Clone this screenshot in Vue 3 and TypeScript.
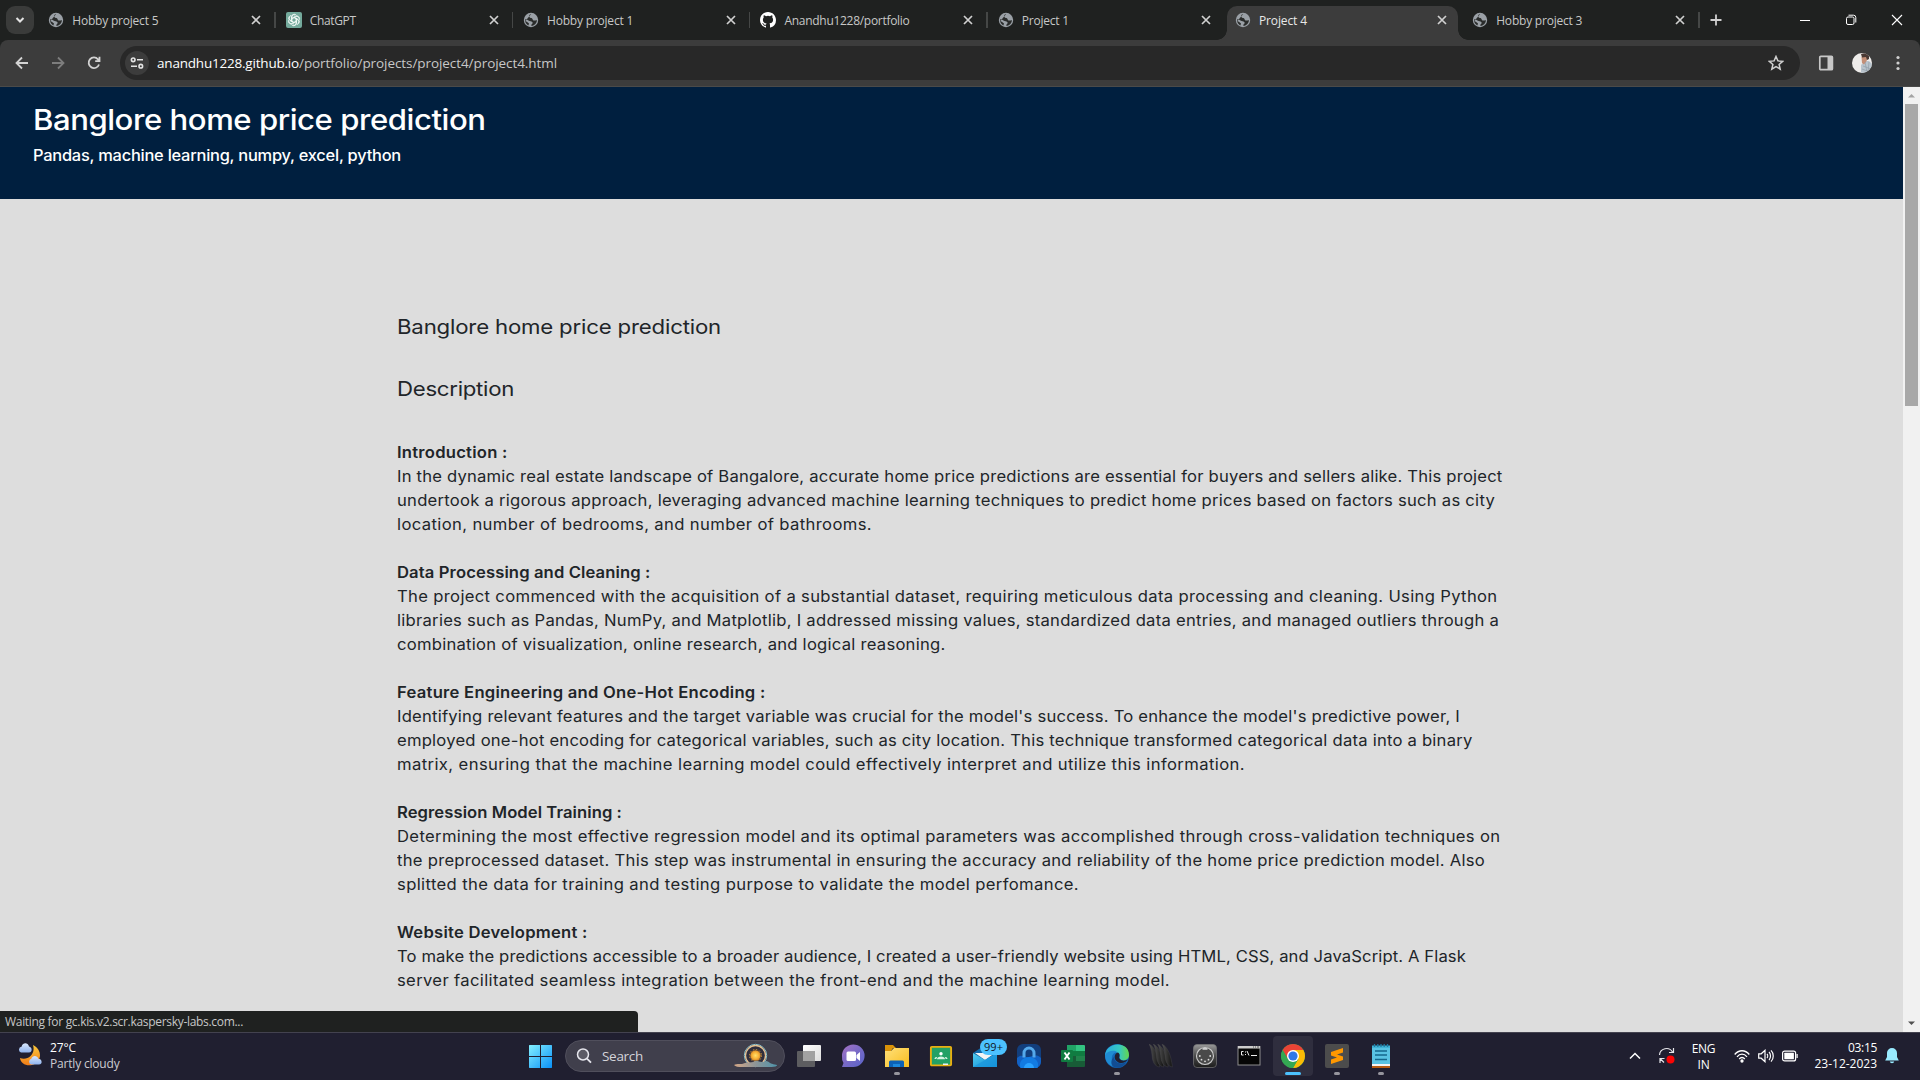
<script setup lang="ts">
import type { Directive } from 'vue'

interface Tab { title: string; icon: 'globe' | 'gpt' | 'github'; width: number; active?: boolean }
interface Line { text: string; width: number }
interface Section { title: Line; lines: Line[] }

// Tracks the text out (or in) so that the run takes exactly the given width,
// taking any horizontal stretch of the element into account.
const vFit: Directive<HTMLElement, number> = {
  mounted(el, binding) {
    const length = (el.textContent ?? '').length
    const drawn = el.getBoundingClientRect().width
    const stretch = new DOMMatrix(getComputedStyle(el).transform).a
    el.style.letterSpacing = `${(binding.value - drawn) / stretch / length}px`
  },
}

const tabs: Tab[] = [
  { title: 'Hobby project 5', icon: 'globe', width: 86 },
  { title: 'ChatGPT', icon: 'gpt', width: 46 },
  { title: 'Hobby project 1', icon: 'globe', width: 86 },
  { title: 'Anandhu1228/portfolio', icon: 'github', width: 125 },
  { title: 'Project 1', icon: 'globe', width: 47 },
  { title: 'Project 4', icon: 'globe', width: 48, active: true },
  { title: 'Hobby project 3', icon: 'globe', width: 86 },
]

const sections: Section[] = [
  {
    title: { text: 'Introduction :', width: 110.5 },
    lines: [
      { text: 'In the dynamic real estate landscape of Bangalore, accurate home price predictions are essential for buyers and sellers alike. This project', width: 1105.5 },
      { text: 'undertook a rigorous approach, leveraging advanced machine learning techniques to predict home prices based on factors such as city', width: 1098 },
      { text: 'location, number of bedrooms, and number of bathrooms.', width: 475 },
    ],
  },
  {
    title: { text: 'Data Processing and Cleaning :', width: 253.5 },
    lines: [
      { text: 'The project commenced with the acquisition of a substantial dataset, requiring meticulous data processing and cleaning. Using Python', width: 1100.5 },
      { text: 'libraries such as Pandas, NumPy, and Matplotlib, I addressed missing values, standardized data entries, and managed outliers through a', width: 1102 },
      { text: 'combination of visualization, online research, and logical reasoning.', width: 548.5 },
    ],
  },
  {
    title: { text: 'Feature Engineering and One-Hot Encoding :', width: 368.5 },
    lines: [
      { text: "Identifying relevant features and the target variable was crucial for the model's success. To enhance the model's predictive power, I", width: 1063 },
      { text: 'employed one-hot encoding for categorical variables, such as city location. This technique transformed categorical data into a binary', width: 1075.5 },
      { text: 'matrix, ensuring that the machine learning model could effectively interpret and utilize this information.', width: 848 },
    ],
  },
  {
    title: { text: 'Regression Model Training :', width: 225 },
    lines: [
      { text: 'Determining the most effective regression model and its optimal parameters was accomplished through cross-validation techniques on', width: 1103.5 },
      { text: 'the preprocessed dataset. This step was instrumental in ensuring the accuracy and reliability of the home price prediction model. Also', width: 1088 },
      { text: 'splitted the data for training and testing purpose to validate the model perfomance.', width: 682 },
    ],
  },
  {
    title: { text: 'Website Development :', width: 190.5 },
    lines: [
      { text: 'To make the predictions accessible to a broader audience, I created a user-friendly website using HTML, CSS, and JavaScript. A Flask', width: 1069 },
      { text: 'server facilitated seamless integration between the front-end and the machine learning model.', width: 773 },
    ],
  },
]
</script>

<template>
  <div class="screen">
    <div class="strip">
      <button class="tab-search">
        <svg width="28" height="28" viewBox="0 0 28 28"><path d="M10.500 12l3.500 3.500 3.500-3.500" fill="none" stroke="#e3e3e3" stroke-width="2" /></svg>
      </button>
      <div v-for="(tab, i) in tabs" :key="i" class="tab" :class="{ active: tab.active, bare: i === 4 || tab.active }">
        <svg v-if="tab.icon === 'globe'" class="favicon" viewBox="0 0 16 16">
          <circle cx="8" cy="8" r="7.200" fill="#9aa0a6" />
          <path d="M8.200 2.100C6 2.700 5.600 4.200 6.600 5.300c.7.8 1.800.6 2.500 1.200.8.700.5 1.900 1.600 2 1.200.100 2.300-.5 3.300-.3-.2 2.700-2.300 5.200-5.200 5.700-.8-.6-.5-1.300.2-1.900.8-.7.9-1.500.2-2.100-.8-.7-2.300-.5-3.300-1.100C4.700 8.100 4.500 7.300 2.100 7.200c-.3 2.700 1 5 3.200 6.200L6 11.800c-.2-.8-1-1-1.600-1.500-.6-.5-1.400-1.200-2-1.300" fill="#2a2c2b" />
        </svg>
        <svg v-else-if="tab.icon === 'gpt'" class="favicon" viewBox="0 0 16 16">
          <rect width="16" height="16" rx="2" fill="#74aa9c" />
          <g fill="none" stroke="#f4fbf8" stroke-width=".85">
            <path v-for="a in 6" :key="a" :transform="`rotate(${a * 60} 8 8)`" d="M6 8.900V4.800c0-2.800 3.500-3.300 4.500-1.400M6 6.300l3.600-2.100c1.800-.8 3.400.7 3.200 2.300" />
          </g>
        </svg>
        <svg v-else class="favicon" viewBox="0 0 16 16">
          <path fill="#fff" d="M8 0C3.580 0 0 3.580 0 8c0 3.540 2.290 6.530 5.470 7.590.4.070.55-.17.55-.38v-1.490c-2.230.48-2.700-.94-2.700-.94-.36-.92-.89-1.170-.89-1.170-.72-.5.060-.49.060-.49.8.060 1.220.82 1.220.82.71 1.220 1.870.87 2.330.66.070-.52.280-.87.500-1.070-1.780-.2-3.640-.89-3.640-3.950 0-.87.310-1.590.82-2.150-.08-.2-.36-1.020.08-2.120 0 0 .67-.21 2.200.82a7.600 7.600 0 014 0c1.530-1.030 2.200-.82 2.200-.82.44 1.100.160 1.920.080 2.120.51.56.82 1.270.82 2.150 0 3.070-1.870 3.750-3.650 3.950.29.250.54.730.54 1.480v2.200c0 .21.150.46.550.38A8 8 0 0016 8c0-4.420-3.580-8-8-8z" />
        </svg>
        <span class="tab-title"><span v-fit="tab.width" class="fit">{{ tab.title }}</span></span>
        <svg class="tab-close" viewBox="0 0 10 10"><path d="M1 1l8 8M9 1L1 9" stroke="currentColor" stroke-width="1.700" /></svg>
      </div>
      <svg class="new-tab" viewBox="0 0 12 12"><path d="M6 .5v11M.5 6h11" stroke="#d0d0d0" stroke-width="1.800" /></svg>
      <div class="window-controls">
        <svg viewBox="0 0 12 12"><path d="M1 6.500h10" stroke="#fff" /></svg>
        <svg viewBox="0 0 12 12" fill="none" stroke="#fff"><rect x="1.500" y="3" width="7.500" height="7.500" rx="1.500" /><path d="M3.500 1.200h5a2.300 2.300 0 012.300 2.300v5" /></svg>
        <svg viewBox="0 0 12 12"><path d="M1 1l10 10M11 1L1 11" stroke="#fff" stroke-width="1.100" /></svg>
      </div>
    </div>

    <div class="toolbar">
      <svg class="nav" viewBox="0 0 16 16"><path d="M14 8H3M8 2.500L2.500 8 8 13.500" /></svg>
      <svg class="nav dim" viewBox="0 0 16 16"><path d="M2 8h11M8 2.500L13.500 8 8 13.500" /></svg>
      <svg class="nav" viewBox="0 0 16 16"><path d="M13 9.500A5.300 5.300 0 1112 4.300l1.200 1.300M13.500 1.800v4.400H9.200" /></svg>
      <div class="omnibox">
        <span class="site-info">
          <svg width="14" height="14" viewBox="0 0 14 14" fill="none" stroke="#e3e3e3" stroke-width="1.600"><circle cx="3.200" cy="3.800" r="1.800" /><path d="M7 3.800h6M1 10.200h6" /><circle cx="10.800" cy="10.200" r="1.800" /></svg>
        </span>
        <span class="url"><span v-fit="142" class="fit host">anandhu1228.github.io</span><span v-fit="258" class="fit">/portfolio/projects/project4/project4.html</span></span>
        <svg class="star" viewBox="0 0 16 16"><path d="M8 1.500l1.900 4.400 4.800.4-3.600 3.100 1.100 4.700L8 11.600l-4.200 2.500 1.100-4.700L1.300 6.300l4.800-.4z" fill="none" stroke="#d0d0d0" stroke-width="1.500" /></svg>
      </div>
      <svg class="panel" viewBox="0 0 16 16"><rect x="1.800" y="1.300" width="12.600" height="13.400" rx="1" fill="none" stroke="#c7c7c7" stroke-width="1.700" /><path d="M9.500 1h5v14h-5z" fill="#c7c7c7" /></svg>
      <svg class="avatar" viewBox="0 0 20 20">
        <defs><clipPath id="face"><circle cx="10" cy="10" r="10" /></clipPath></defs>
        <g clip-path="url(#face)"><path fill="#eeecea" d="M0 0h20v20H0z" /><path fill="#b9c4cd" d="M9 12l4-4 4 0 3 3v9H9z" /><path fill="#c48f77" d="M9.500 4l4-2 2.500 3-2 4-2 2.500-2-1.500z" /><path fill="#4a3a35" d="M9 1l4-1 4 2v4l-2 1-1-3-4 .5z" /><path stroke="#8b98a3" stroke-width=".6" d="M11 13l8 3M10 16l8 3M13 9l2 10M17 9l-1 10" /></g>
      </svg>
      <svg class="kebab" viewBox="0 0 4 16" fill="#d0d0d0"><circle cx="2" cy="2.500" r="1.600" /><circle cx="2" cy="8" r="1.600" /><circle cx="2" cy="13.500" r="1.600" /></svg>
    </div>

    <div class="viewport">
      <div class="page">
        <header class="banner">
          <h1><span v-fit="452.500" class="fit">Banglore home price prediction</span></h1>
          <p><span v-fit="368" class="fit">Pandas, machine learning, numpy, excel, python</span></p>
        </header>
        <main class="article">
          <h2><span v-fit="324" class="fit">Banglore home price prediction</span></h2>
          <h2><span v-fit="117" class="fit">Description</span></h2>
          <section v-for="s in sections" :key="s.title.text">
            <h3><span v-fit="s.title.width" class="fit">{{ s.title.text }}</span></h3>
            <p v-for="line in s.lines" :key="line.text"><span v-fit="line.width" class="fit">{{ line.text }}</span></p>
          </section>
        </main>
      </div>
      <div class="scrollbar">
        <svg viewBox="0 0 17 17"><path d="M5 10.500h7L8.500 7z" fill="#a3a3a3" /></svg>
        <div class="thumb"></div>
        <svg class="down" viewBox="0 0 17 17"><path d="M5 6.500h7L8.500 10z" fill="#505050" /></svg>
      </div>
      <div class="status"><span v-fit="238" class="fit">Waiting for gc.kis.v2.scr.kaspersky-labs.com...</span></div>
    </div>

    <footer class="taskbar">
      <div class="weather">
        <svg width="24" height="24" viewBox="0 0 24 24">
          <defs><linearGradient id="moon" x2="0" y2="1"><stop stop-color="#fbc83a" /><stop offset="1" stop-color="#f07c18" /></linearGradient><linearGradient id="cloud" x2="0" y2="1"><stop stop-color="#d9e7fc" /><stop offset="1" stop-color="#8fb3ee" /></linearGradient></defs>
          <path d="M15 2c10 5 9 17-1 20C8 23.500 2.500 20 2 15c7 3 16-3 13-13z" fill="url(#moon)" />
          <path d="M3 9.500a3 3 0 01.5-5.800C5-1 10-.5 11 3.500c3.500.5 3.500 6 0 6z" fill="url(#cloud)" />
          <path d="M13 21.500a3 3 0 01.3-5.700c1.200-4 6.200-3.500 7 0 4.300.3 4.300 5.700.7 5.700z" fill="url(#cloud)" />
        </svg>
        <div class="weather-text"><span v-fit="26" class="fit">27°C</span><span v-fit="69.500" class="fit soft">Partly cloudy</span></div>
      </div>

      <div class="launcher">
        <svg class="start" viewBox="0 0 23 23"><defs><linearGradient id="win" x2="1" y2="1"><stop stop-color="#84f0ff" /><stop offset="1" stop-color="#0a91f8" /></linearGradient></defs><path d="M.5 0H11v11H0V.5zM12 0h10.500l.5.500V11H12zM0 12h11v11H.5l-.5-.5zM12 12h11v10.500l-.5.500H12z" fill="url(#win)" /></svg>
        <div class="search">
          <svg class="glass" viewBox="0 0 16 16"><circle cx="7" cy="6.500" r="5.500" fill="#5c5b66" stroke="#e7e7ee" stroke-width="1.500" /><path d="M11 10.700l4 4" stroke="#e7e7ee" stroke-width="1.700" /></svg>
          <span v-fit="41" class="fit">Search</span>
          <svg class="sun" viewBox="0 0 44 26">
            <defs><radialGradient id="glow"><stop stop-color="#ffe06a" /><stop offset=".6" stop-color="#f9b53b" /><stop offset="1" stop-color="#d98a25" /></radialGradient><linearGradient id="hill"><stop stop-color="#d6a887" /><stop offset=".5" stop-color="#8d9597" /><stop offset="1" stop-color="#4f94aa" /></linearGradient></defs>
            <circle cx="21.500" cy="12.500" r="11.200" fill="#302e3d" stroke="#83bfce" stroke-width="1" /><circle cx="21.500" cy="12.500" r="10" fill="none" stroke="#e4c193" stroke-width="1.300" />
            <circle cx="21.500" cy="12.500" r="5.200" fill="url(#glow)" /><circle cx="21.500" cy="12.500" r="6" fill="none" stroke="#d99a36" stroke-dasharray="1.500 1.600" />
            <path d="M0 22c3-2 7 0 11-2 4-1 6 0 9-1.500 3-2 5 .5 8 .5 2 0 4-2 6-.5s3 2.500 9 3.500c1 1-3 2.500-7 2H12C7 24 2 24.500 0 22z" fill="url(#hill)" />
          </svg>
        </div>
        <div class="app"><svg viewBox="0 0 24 24"><defs><linearGradient id="tv" x2="1" y2="1"><stop stop-color="#fff" /><stop offset="1" stop-color="#ddd" /></linearGradient></defs><rect x="6" y="1" width="18" height="16" rx="1" fill="url(#tv)" /><rect x="0" y="7" width="18" height="16" rx="1" fill="#686868" opacity=".85" /><path d="M6 7h12v10H6z" fill="#a2a2a2" /></svg></div>
        <div class="app"><svg viewBox="0 0 24 24"><defs><linearGradient id="chat" x2="1" y2="1"><stop stop-color="#a873c5" /><stop offset=".5" stop-color="#786ac6" /><stop offset="1" stop-color="#5964cb" /></linearGradient></defs><path d="M1 12a11.300 11.300 0 1111 11H1l1.500-4A11 11 0 011 12z" fill="url(#chat)" /><rect x="5.500" y="7.500" width="9.500" height="9.500" rx="1.500" fill="#fff" /><path d="M15.500 11l3.500-3v9l-3.500-3z" fill="#fff" /></svg></div>
        <div class="app run"><svg viewBox="0 0 24 24"><defs><linearGradient id="dir" x2="1" y2="1"><stop stop-color="#ffe07a" /><stop offset="1" stop-color="#f9bd1d" /></linearGradient></defs><path d="M0 1h8l3 3h-3L6 7H0z" fill="#d99208" /><path d="M0 7h6l3-3h15v19H0z" fill="url(#dir)" /><path d="M4 23v-5a1.500 1.500 0 011.500-1.500h12A1.500 1.500 0 0119 18v5z" fill="#0c62b6" /><path d="M8 20h7v3H8z" fill="#1c89dc" /></svg></div>
        <div class="app"><svg viewBox="0 0 24 24"><rect x="1.900" y="2.900" width="20.200" height="18.500" rx=".8" fill="#23a165" stroke="#e9b012" stroke-width="1.900" /><circle cx="12" cy="9.800" r="1.700" fill="#fff" /><path d="M8 15.200c0-3.700 8-3.700 8 0zM5.500 15c0-1.800 1.500-2.400 2.600-1.900l-.8 1.900zM18.500 15c0-1.800-1.500-2.400-2.600-1.900l.8 1.900z" fill="#d8f3e2" /><path d="M14 19.500h5v1.500h-5z" fill="#eee" /></svg></div>
        <div class="app"><svg viewBox="0 0 24 24"><defs><linearGradient id="mail" x2="1" y2="1"><stop stop-color="#52cdf0" /><stop offset="1" stop-color="#0c8bd5" /></linearGradient></defs><path d="M0 9L12 1l12 8-12 8z" fill="#1167a8" /><path d="M2 9h20l-10 7z" fill="#f4f4f4" /><path d="M0 9l12 7 12-7v14H0z" fill="url(#mail)" /><path d="M0 23L24 9v14z" fill="#1996dc" opacity=".7" /></svg><span class="badge">99+</span></div>
        <div class="app"><svg viewBox="0 0 24 24"><rect width="24" height="24" rx="6" fill="#123e7c" /><path d="M0 14C5 9 8 14 12 13s8-3 12 1v4a6 6 0 01-6 6H6a6 6 0 01-6-6z" fill="#1261c4" /><path d="M7 13.500V9a5 5 0 0110 0v4.500" fill="none" stroke="#55a9eb" stroke-width="3" /><path d="M3.500 24C1 18 6 13 12 13s11 5 8.500 11z" fill="#127be2" /><path d="M7 24a5 5 0 0110 0z" fill="#29a2ff" /></svg></div>
        <div class="app"><svg viewBox="0 0 24 24"><path fill="#21a366" d="M6 1h9v6H6z" /><path fill="#33c481" d="M15 1h8a1 1 0 011 1v5h-9z" /><path fill="#107c41" d="M6 7h9v5H6zM15 7h9v5h-9z" /><path fill="#185c37" d="M6 12h18v10a1 1 0 01-1 1H6z" /><path fill="#21834c" d="M15 12h9v5h-9z" /><rect y="6" width="12" height="12" rx="1" fill="#107c41" /><path d="M3.500 8.500l5 7M8.500 8.500l-5 7" stroke="#fff" stroke-width="1.900" /></svg></div>
        <div class="app run"><svg viewBox="0 0 24 24"><defs><linearGradient id="edge"><stop stop-color="#2aa9df" /><stop offset=".6" stop-color="#36c8c2" /><stop offset="1" stop-color="#65d84a" /></linearGradient></defs><circle cx="12" cy="12" r="12" fill="#1269b9" /><path d="M0 12C0-2 24-4 24 11c0 5-6 7-9 4-1.500-1.500.5-2-.5-4.500C12 6 3 7 0 12z" fill="url(#edge)" /><path d="M0 11c3-5 10-5 12-3-6 1-7 8-2 14C5 23 0 18 0 11z" fill="#208bd2" /><path d="M13 8.500c3 2 .5 4.500 1.500 6 2 3 6 2.500 8.500 1-2 3-6 4.500-9.500 3C8 16 9 9 13 8.500z" fill="#211f30" /><path d="M9 13c0 6 7 8 12.500 5C19 23 13 25 9 23c-4-2-3-8 0-10z" fill="#124d93" /></svg></div>
        <div class="app"><svg viewBox="0 0 24 24"><defs><linearGradient id="claw" x2="1"><stop stop-color="#555" /><stop offset="1" stop-color="#111" /></linearGradient></defs><path v-for="n in 4" :key="n" :transform="`translate(${(n - 1) * 4.3} 0)`" d="M0 0c6 3 9 11 10.500 23-5-1-7-5-7.500-12C2.500 6 1.500 3 0 0z" fill="url(#claw)" stroke="#4a4a4d" stroke-width=".4" /></svg></div>
        <div class="app"><svg viewBox="0 0 24 24"><defs><linearGradient id="port" x2="0" y2="1"><stop stop-color="#999" /><stop offset=".5" stop-color="#4a4a4a" /><stop offset="1" stop-color="#1c1c1c" /></linearGradient></defs><rect x=".5" y=".5" width="23" height="23" rx="3.500" fill="url(#port)" stroke="#777" stroke-width=".7" /><circle cx="12" cy="12" r="8.500" fill="#4a4a4a" stroke="#ccc" stroke-width="1.100" /><path d="M9.500 4h5v1.800h-5z" fill="#ccc" /><g fill="#ddd"><circle cx="6.800" cy="12" r=".9" /><circle cx="17.200" cy="12" r=".9" /><circle cx="8.500" cy="15.700" r=".9" /><circle cx="15.500" cy="15.700" r=".9" /><circle cx="12" cy="17.300" r=".9" /></g></svg></div>
        <div class="app"><svg viewBox="0 0 24 24"><rect x="1" y="2.500" width="22" height="18.500" fill="#050505" stroke="#8e8e8e" /><path d="M1 2h22v2.500H1z" fill="#ccc" /><path d="M16 3h1M18 3h1M20 3h2" stroke="#555" /><path d="M6.500 7.500h-2v3.500h2M8.500 7.500v1M8.500 10v1M10 7l2 4.500M14 11.500h6" fill="none" stroke="#eee" /></svg></div>
        <div class="app focus"><svg viewBox="0 0 24 24"><circle cx="12" cy="12" r="12" fill="#34a853" /><path d="M12 12L1.610 6A12 12 0 0122.390 6z" fill="#ea4335" /><path d="M12 6h10.390A12 12 0 0112 24l5.200-9z" fill="#fbbc05" /><path d="M1.610 6L6.800 15l5.200-3-1-6z" fill="#ea4335" /><path d="M1.610 6A12 12 0 0012 24l5.200-9H6.800z" fill="#34a853" /><circle cx="12" cy="12" r="6" fill="#fff" /><circle cx="12" cy="12" r="4.600" fill="#2f78e8" /></svg></div>
        <div class="app run"><svg viewBox="0 0 24 24"><rect width="24" height="24" rx="2" fill="#4c4c4c" /><path d="M6 8l12-4v4.500l-6 2 6 2.100V16L6 20v-4.500l6-2-6-2z" fill="#ff9800" /></svg></div>
        <div class="app run"><svg viewBox="0 0 24 24"><path d="M3 2h18v19H3z" fill="#59c3e3" /><path d="M3 1.500h18V4H3z" fill="#3fb2d6" /><path d="M3 20h18v2H3z" fill="#f4f4f4" /><path d="M3 22h18v2H3z" fill="#b75c12" /><path d="M5.500 0v3M8.800 0v3M12 0v3M15.200 0v3M18.500 0v3" stroke="#1d7ba2" stroke-width="1.300" /><path d="M6 7h12M6 11h12M6 15.500h12" stroke="#14688d" stroke-width="1.400" /></svg></div>
      </div>

      <div class="tray">
        <svg class="chevron" viewBox="0 0 12 8"><path d="M1 6.500l5-5 5 5" fill="none" stroke="#fff" stroke-width="1.500" /></svg>
        <svg class="sync" viewBox="0 0 18 18"><path d="M1.500 8A7 7 0 0114.500 5M15.500 1v4.500H11M6 15.500l-3.500-3.500M2 16v-4.500h4.500" fill="none" stroke="#e6e6ea" stroke-width="1.200" /><circle cx="12.500" cy="12.500" r="4" fill="#fb0505" /></svg>
        <div class="lang"><span v-fit="23.500" class="fit">ENG</span><span v-fit="12" class="fit">IN</span></div>
        <svg class="wifi" viewBox="0 0 16 14" fill="none" stroke="#fff" stroke-width="1.300"><path d="M.7 5.500c4-5 10.600-5 14.600 0M3 7.800c3-3.500 7-3.500 10 0M5.200 10c1.700-2 3.900-2 5.600 0" /><circle cx="8" cy="12" r="1" fill="#fff" /></svg>
        <svg class="sound" viewBox="0 0 17 14" fill="none" stroke="#fff" stroke-width="1.200"><path d="M.7 4.800h2.500L7 1.300v11.400L3.200 9.200H.7zM9 5c.9 1 .9 3 0 4M11 3c2 2 2 6 0 8M13 1.300c3 3 3 8.400 0 11.400" /></svg>
        <svg class="battery" viewBox="0 0 16 12"><rect x=".6" y="1.100" width="13" height="9.800" rx="2" fill="none" stroke="#fff" stroke-width="1.200" /><rect x="2.300" y="2.800" width="9.600" height="6.400" rx=".5" fill="#fff" /><path d="M14.500 4h1.200v4h-1.200z" fill="#fff" /></svg>
        <div class="clock"><span v-fit="29" class="fit">03:15</span><span v-fit="62.500" class="fit">23-12-2023</span></div>
        <svg class="bell" viewBox="0 0 14 16" fill="#99ebff"><path d="M7 0a5 5 0 00-5 5v4L.2 12.500h13.600L12 9V5a5 5 0 00-5-5zM4.800 13.500h4.400c-.4 2.300-4 2.300-4.400 0z" /></svg>
      </div>
    </footer>
  </div>
</template>

<style>
html,
body {
  margin: 0;
  overflow: hidden;
}
</style>

<style scoped>
.screen {
  width: 1920px;
  height: 1080px;
  display: flex;
  flex-direction: column;
  overflow: hidden;
  background: #1f2120;
  font-family: "Open Sans", "Noto Sans", sans-serif;
  font-size: 12px;
}
svg { display: block; flex: none; }
.fit { display: inline-block; white-space: pre; flex: none; }

.strip {
  height: 40px;
  flex: none;
  display: flex;
  align-items: center;
  background: #1f2120;
}
.tab-search {
  margin: 0 4.3px 0 6px;
  padding: 0;
  width: 28px;
  height: 28px;
  border: 0;
  border-radius: 9px;
  background: #3a3b3a;
}
.tab {
  position: relative;
  box-sizing: border-box;
  width: 237.4px;
  height: 34px;
  margin-top: 6px;
  padding: 0 14.5px 6px 10px;
  display: flex;
  align-items: center;
  color: #c7c8c7;
}
.tab::after {
  content: "";
  position: absolute;
  right: 0;
  top: 6px;
  width: 1.5px;
  height: 16px;
  background: #454746;
}
.tab.bare::after { display: none; }
.tab.active {
  width: 231px;
  margin-left: 1.7px;
  margin-right: 4.3px;
  padding-left: 8px;
  padding-right: 11px;
  border-radius: 10px 10px 0 0;
  background: #3c3c3c;
  color: #e8e8e8;
}
.tab.active::before,
.tab.active::after {
  content: "";
  display: block;
  position: absolute;
  top: auto;
  right: auto;
  bottom: 0;
  left: -10px;
  width: 10px;
  height: 10px;
  background: radial-gradient(circle at 0 0, transparent 9.5px, #3c3c3c 10px);
}
.tab.active::after {
  left: 100%;
  background: radial-gradient(circle at 100% 0, transparent 9.5px, #3c3c3c 10px);
}
.favicon { width: 16px; height: 16px; margin-right: 8px; }
.tab-title { flex: 1; line-height: 16px; padding-top: 1px; }
.tab-close { width: 10px; height: 10px; color: #d0d0d0; }
.new-tab { width: 12px; height: 12px; margin-left: 10px; }
.window-controls { margin-left: auto; margin-right: 17px; display: flex; gap: 34px; }
.window-controls svg { width: 12px; height: 12px; }

.toolbar {
  height: 47px;
  flex: none;
  box-sizing: border-box;
  padding: 0 20px 0 14px;
  display: flex;
  align-items: center;
  background: #3c3c3c;
  border-bottom: 1px solid #4a4a49;
  border-radius: 8px 8px 0 0;
}
.nav { width: 16px; height: 16px; margin-right: 20px; fill: none; stroke: #d3d3d3; stroke-width: 1.8; }
.nav.dim { stroke: #7d7d7d; }
.omnibox {
  width: 1680px;
  height: 34px;
  margin-left: -2px;
  box-sizing: border-box;
  padding: 0 16px 0 5px;
  border-radius: 17px;
  background: #282828;
  display: flex;
  align-items: center;
}
.site-info { width: 24px; height: 24px; border-radius: 50%; background: #3c3c3c; display: flex; align-items: center; justify-content: center; }
.url { display: flex; flex: 1; margin-left: 8px; font-size: 13.5px; line-height: 20px; color: #c7c7c7; }
.host { color: #fff; }
.star { width: 16px; height: 16px; }
.panel { width: 16px; height: 16px; margin-left: 18px; }
.avatar { width: 20px; height: 20px; margin-left: 18px; }
.kebab { width: 4px; height: 16px; margin-left: auto; }

.viewport {
  position: relative;
  flex: 1;
  min-height: 0;
  display: flex;
}
.page {
  flex: 1;
  overflow: hidden;
  background: #ddd;
  font-family: Inter, "Noto Sans", sans-serif;
  color: #212529;
}
.page .fit { transform: scaleX(1.06); transform-origin: 0 50%; }
.page h1 .fit, .page h2 .fit { transform: scaleX(1.11); }
.banner {
  box-sizing: border-box;
  height: 112px;
  padding: 15.5px 33px 0;
  background: #001f3f;
  color: #fff;
}
h1, h2, h3, p { margin: 0; font-weight: 400; }
.banner h1 { height: 34px; font-size: 28px; font-weight: 500; line-height: 34px; }
.banner p { margin-top: 7px; font-size: 15.5px; font-weight: 500; line-height: 24px; }
.article { padding: 116px 0 0 396.5px; }
.article h2 { height: 24px; margin-bottom: 38px; font-size: 20px; line-height: 24px; }
.article h2 + section { margin-top: 40px; }
section { margin-bottom: 24px; }
section h3, section p { height: 24px; font-size: 15.7px; line-height: 24px; }
section h3 { font-weight: 600; }

.scrollbar {
  width: 17px;
  display: flex;
  flex-direction: column;
  align-items: center;
  background: #f1f1f1;
}
.scrollbar svg { width: 17px; height: 17px; }
.thumb { width: 13px; height: 302px; background: #a8a8a8; }
.down { margin-top: auto; }
.status {
  position: absolute;
  left: 0;
  bottom: 0;
  box-sizing: border-box;
  width: 638px;
  height: 21px;
  padding-left: 5px;
  border-radius: 0 4px 0 0;
  background: #1f2120;
  color: #c7c7c7;
  line-height: 22px;
}

.taskbar {
  position: relative;
  height: 48px;
  flex: none;
  box-sizing: border-box;
  border-top: 1px solid #43424f;
  background: #201f30;
  color: #fff;
  display: flex;
  align-items: flex-start;
  font-size: 12px;
  line-height: 16px;
}
.weather { width: 510px; padding: 7px 0 0 18px; box-sizing: border-box; display: flex; align-items: center; gap: 8px; }
.weather-text { display: flex; flex-direction: column; align-items: flex-start; }
.weather svg { margin-top: -2px; }
.soft { color: #ccccd2; }
.launcher { display: flex; align-items: center; height: 46px; }
.start { width: 23px; height: 23px; margin: 1px 13px 0 19px; }
.search {
  width: 220px;
  height: 32px;
  margin-right: 4px;
  box-sizing: border-box;
  padding: 0 6px 0 10px;
  border: 1px solid #504f5c;
  border-radius: 16px;
  background: #403f4c;
  color: #d4d4da;
  display: flex;
  align-items: center;
  font-size: 13.5px;
}
.glass { width: 16px; height: 16px; margin-right: 10px; }
.sun { width: 44px; height: 26px; margin-left: auto; }
.app {
  position: relative;
  width: 40px;
  height: 40px;
  margin: 0 4px 0 0;
  display: flex;
  align-items: center;
  justify-content: center;
  border-radius: 4px;
}
.app svg { width: 24px; height: 24px; }
.run::after, .focus::after {
  content: "";
  position: absolute;
  bottom: 1px;
  width: 6px;
  height: 3px;
  border-radius: 2px;
  background: #96959d;
}
.focus { background: #2f2e3e; }
.focus::after { width: 16px; background: #4cc2ff; }
.badge {
  position: absolute;
  left: 15px;
  top: 3px;
  width: 27px;
  height: 16px;
  border-radius: 8px;
  background: #4cc2ff;
  color: #10151c;
  font-size: 11px;
  line-height: 16px;
  text-align: center;
}

.tray { margin-left: auto; margin-right: 21px; height: 46px; display: flex; align-items: center; }
.chevron { width: 12px; height: 8px; margin-right: 17px; }
.sync { width: 18px; height: 18px; margin-right: 16px; }
.lang { width: 24px; margin-right: 18px; display: flex; flex-direction: column; align-items: center; padding-top: 1px; }
.wifi { width: 16px; height: 14px; margin-right: 8px; }
.sound { width: 17px; height: 14px; margin-right: 7px; }
.battery { width: 16px; height: 12px; margin-right: 17px; }
.clock { display: flex; flex-direction: column; align-items: flex-end; margin-right: 8px; }
.bell { width: 14px; height: 16px; }
</style>
